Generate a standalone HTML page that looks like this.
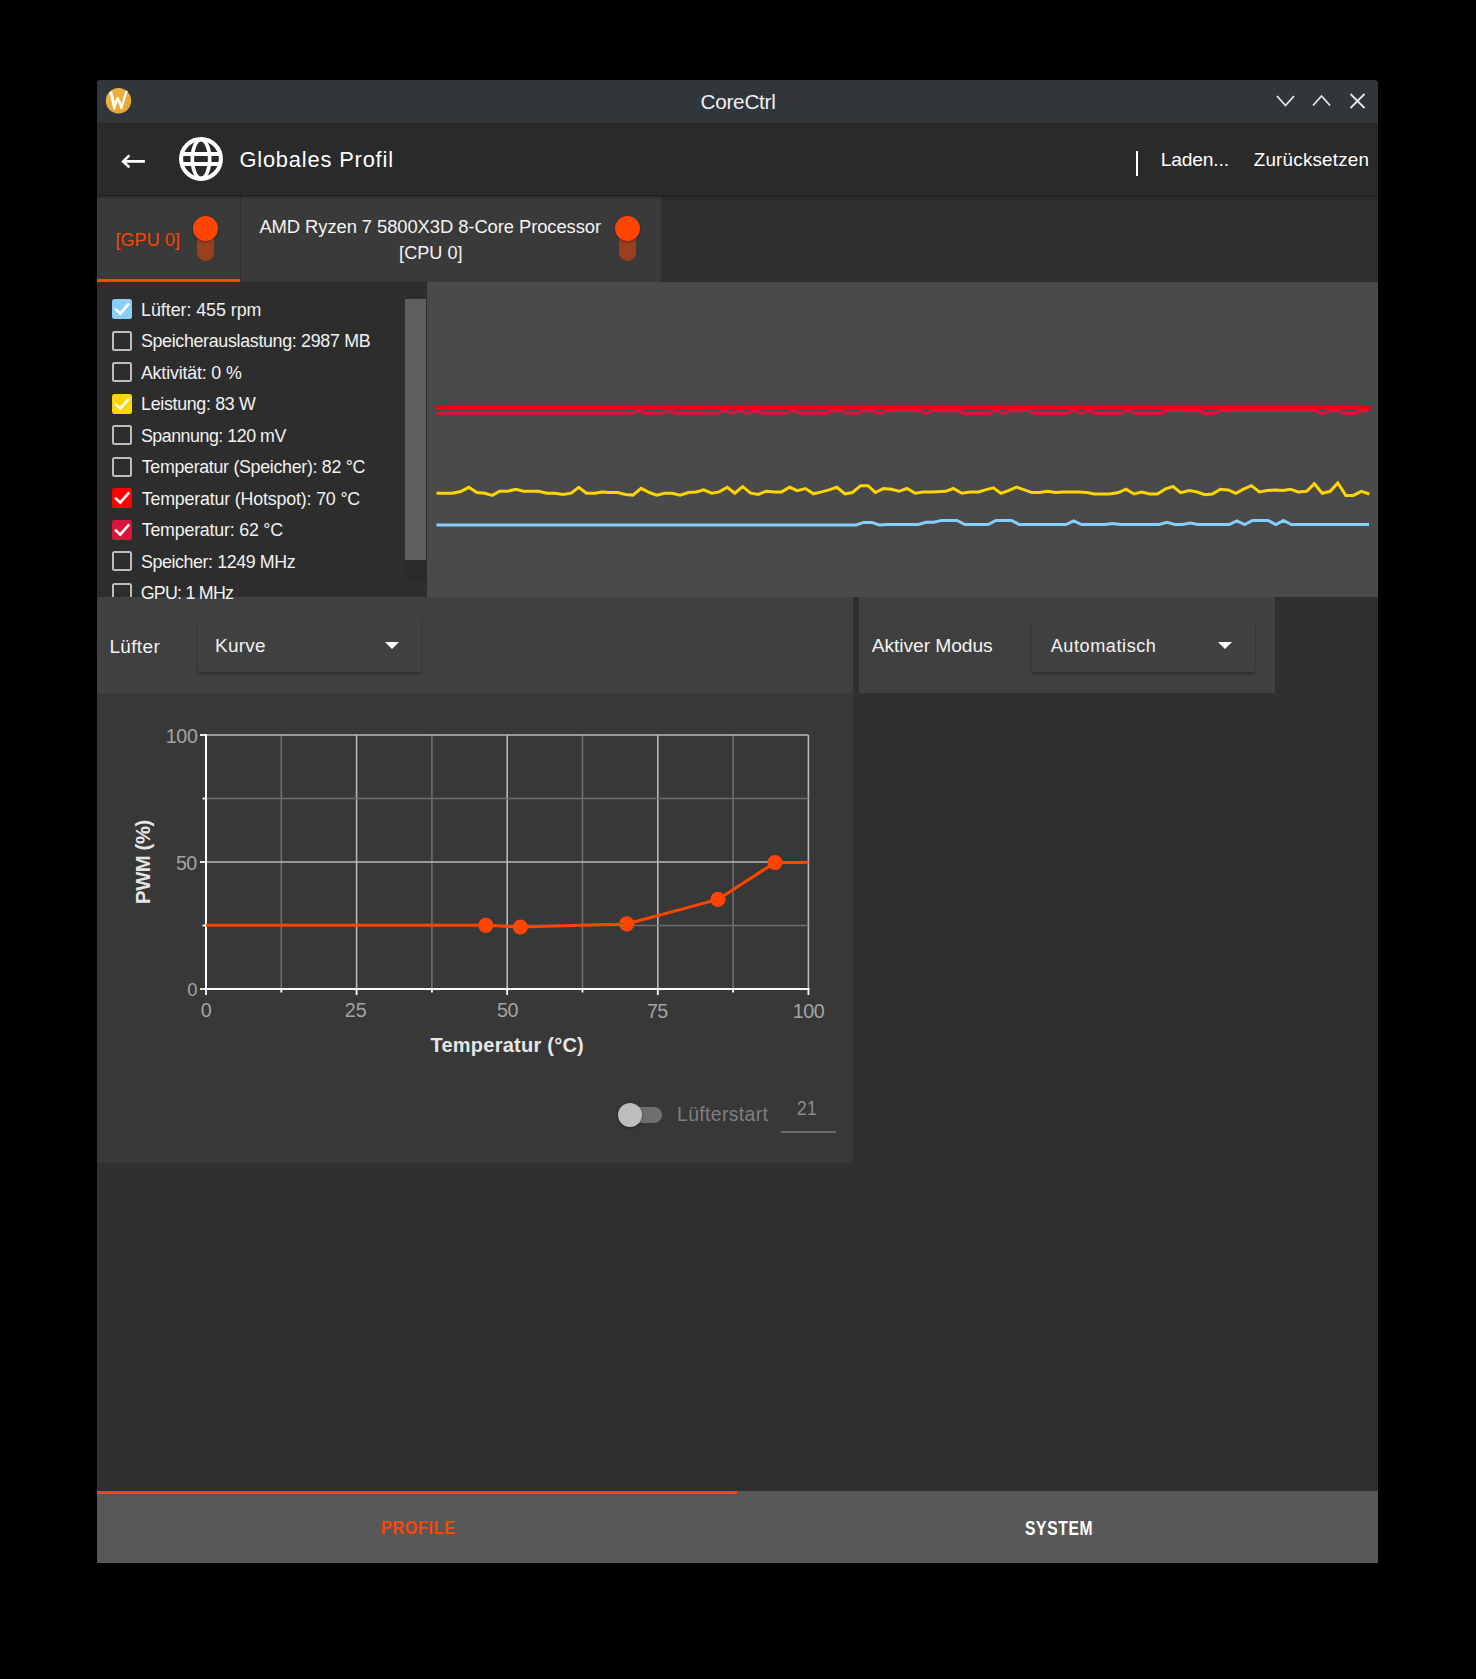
<!DOCTYPE html>
<html><head><meta charset="utf-8">
<style>
*{box-sizing:border-box;margin:0;padding:0}
html,body{width:1476px;height:1679px;background:#000;overflow:hidden;font-family:"Liberation Sans",sans-serif;color:#f0f0f0}
.a{position:absolute}
.t{position:absolute;white-space:nowrap;line-height:1}
</style></head><body>
<div class="a" id="win" style="left:97px;top:80px;width:1281px;height:1483px;background:#303030;border-radius:4px 4px 0 0;overflow:hidden">
</div>
<!-- titlebar -->
<div class="a" style="left:97px;top:80px;width:1281px;height:43px;background:#31363b;border-radius:4px 4px 0 0"></div>
<svg class="a" style="left:104px;top:86px" width="30" height="30" viewBox="0 0 30 30">
 <defs><linearGradient id="wg" x1="0" y1="0" x2="1" y2="1"><stop offset="0" stop-color="#eeb24e"/><stop offset="0.6" stop-color="#e9ad3a"/><stop offset="1" stop-color="#e6a42a"/></linearGradient></defs>
 <circle cx="14.5" cy="14.7" r="12.7" fill="url(#wg)"/>
 <path d="M5.4 5.9 L8.1 5.6 L10.6 15.8 L13.5 10.8 L14.1 10.8 L17.6 17.2 L21.3 4.9 L23.8 4.8 L18.2 22.8 Q17.4 24.2 16.6 22.8 L13.8 14.9 L11.1 22.9 Q10.2 24.2 9.3 22.9 Z" fill="#fff"/>
</svg>

<svg class="a" style="left:1270px;top:86px" width="100" height="30" viewBox="0 0 100 30">
 <path d="M7 10 L15.5 19.5 L24 10" fill="none" stroke="#e8e8e8" stroke-width="1.8"/>
 <path d="M43 19.5 L51.5 10 L60 19.5" fill="none" stroke="#e8e8e8" stroke-width="1.8"/>
 <path d="M80.5 8 L94.5 22 M94.5 8 L80.5 22" fill="none" stroke="#e8e8e8" stroke-width="1.8"/>
</svg>
<!-- header -->
<div class="a" style="left:97px;top:123px;width:1281px;height:72px;background:#2a2a2a"></div>

<svg class="a" style="left:118px;top:150px" width="30" height="22" viewBox="0 0 30 22">
 <path d="M5.5 11.4 L26.9 11.4 M11.4 5.4 L5.2 11.4 L11.4 17.4" fill="none" stroke="#fff" stroke-width="2.7" stroke-linecap="butt"/>
</svg>
<svg class="a" style="left:177px;top:135px" width="48" height="48" viewBox="0 0 48 48">
 <circle cx="24" cy="24" r="19.9" fill="none" stroke="#fff" stroke-width="4.1"/>
 <ellipse cx="24" cy="24" rx="8.7" ry="19.3" fill="none" stroke="#fff" stroke-width="3.6"/>
 <path d="M4 19 L44 19 M4 29 L44 29" stroke="#fff" stroke-width="4"/>
</svg>

<div class="a" style="left:1136px;top:151px;width:2px;height:25px;background:#fff"></div>


<!-- tabs -->
<div class="a" style="left:97px;top:196px;width:1281px;height:86px;background:#2f2f2f"></div>
<div class="a" style="left:97px;top:196px;width:143px;height:86px;background:#3a3a3a"></div>
<div class="a" style="left:241px;top:196px;width:420px;height:86px;background:#3a3a3a"></div>
<div class="a" style="left:97px;top:279px;width:143px;height:3px;background:#ff4500"></div>

<div class="a" style="left:197px;top:225px;width:17px;height:36px;border-radius:8.5px;background:#9a3f1f"></div>
<div class="a" style="left:193px;top:216px;width:25px;height:25px;border-radius:50%;background:#ff4500;box-shadow:0 1px 3px rgba(0,0,0,.35)"></div>


<div class="a" style="left:619px;top:225px;width:17px;height:36px;border-radius:8.5px;background:#9a3f1f"></div>
<div class="a" style="left:615px;top:216px;width:25px;height:25px;border-radius:50%;background:#ff4500;box-shadow:0 1px 3px rgba(0,0,0,.35)"></div>
<div class="a" style="left:97px;top:195px;width:1281px;height:1px;background:#1f1f1f"></div><div class="a" style="left:661px;top:196px;width:717px;height:5px;background:linear-gradient(#262626,#2f2f2f)"></div><div class="a" style="left:97px;top:196px;width:564px;height:4px;background:linear-gradient(rgba(0,0,0,.25),rgba(0,0,0,0))"></div>
<!-- sensors list -->
<div class="a" style="left:97px;top:282px;width:330px;height:315px;background:#2d2d2d;overflow:hidden" id="list">
<div class="a" style="left:15px;top:17.0px;width:20.4px;height:20.4px;border-radius:2.5px;background:#87cefa"><svg width="20.5" height="20.5" viewBox="0 0 20.5 20.5"><path d="M3.1 9.6 L8.2 14.6 L17.2 4.3" fill="none" stroke="#fff" stroke-width="2.6"/></svg></div><div class="a" style="left:15px;top:48.5px;width:20.4px;height:20.4px;border-radius:2.5px;border:2.3px solid #bdbdbd"></div><div class="a" style="left:15px;top:80.0px;width:20.4px;height:20.4px;border-radius:2.5px;border:2.3px solid #bdbdbd"></div><div class="a" style="left:15px;top:111.5px;width:20.4px;height:20.4px;border-radius:2.5px;background:#ffd700"><svg width="20.5" height="20.5" viewBox="0 0 20.5 20.5"><path d="M3.1 9.6 L8.2 14.6 L17.2 4.3" fill="none" stroke="#fff" stroke-width="2.6"/></svg></div><div class="a" style="left:15px;top:143.0px;width:20.4px;height:20.4px;border-radius:2.5px;border:2.3px solid #bdbdbd"></div><div class="a" style="left:15px;top:174.5px;width:20.4px;height:20.4px;border-radius:2.5px;border:2.3px solid #bdbdbd"></div><div class="a" style="left:15px;top:206.0px;width:20.4px;height:20.4px;border-radius:2.5px;background:#ff0000"><svg width="20.5" height="20.5" viewBox="0 0 20.5 20.5"><path d="M3.1 9.6 L8.2 14.6 L17.2 4.3" fill="none" stroke="#fff" stroke-width="2.6"/></svg></div><div class="a" style="left:15px;top:237.5px;width:20.4px;height:20.4px;border-radius:2.5px;background:#dc143c"><svg width="20.5" height="20.5" viewBox="0 0 20.5 20.5"><path d="M3.1 9.6 L8.2 14.6 L17.2 4.3" fill="none" stroke="#fff" stroke-width="2.6"/></svg></div><div class="a" style="left:15px;top:269.0px;width:20.4px;height:20.4px;border-radius:2.5px;border:2.3px solid #bdbdbd"></div><div class="a" style="left:15px;top:300.5px;width:20.4px;height:20.4px;border-radius:2.5px;border:2.3px solid #bdbdbd"></div>
</div>
<div class="a" style="left:405px;top:299px;width:21px;height:261px;background:#5f5f5f"></div>
<div class="a" style="left:405px;top:560px;width:21px;height:21px;background:#2a2a2a"></div>
<!-- chart -->
<div class="a" style="left:427px;top:282px;width:951px;height:315px;background:#4a4a4a"></div>
<svg class="a" style="left:0;top:0" width="1476" height="1679" viewBox="0 0 1476 1679" fill="none" stroke-width="3" stroke-linejoin="miter">
<line x1="436.5" y1="407.5" x2="1369" y2="407.5" stroke="#ff0000" stroke-width="3"/>
<polyline points="436.5,493.2 452.5,493.2 460.7,491.5 468.8,487.3 476.9,492.5 485.0,493.2 492.2,495.4 499.7,491.2 507.8,491.2 515.9,489.3 523.4,491.2 538.7,491.2 546.8,493.2 555.0,493.2 563.1,494.5 571.2,493.2 578.7,487.3 586.5,493.2 594.6,493.2 602.1,491.9 610.2,492.5 617.7,492.5 625.5,494.5 633.0,495.1 641.1,488.3 649.3,492.5 656.7,495.1 664.6,493.2 672.0,493.2 680.2,495.1 688.3,492.5 696.4,491.9 703.6,489.9 711.7,493.2 719.2,491.9 727.3,487.3 734.8,493.2 742.6,486.7 750.7,493.2 758.2,494.5 766.3,491.2 774.5,491.9 781.6,491.9 789.8,487.3 797.2,490.6 805.4,488.6 813.5,493.8 821.6,491.9 829.1,489.9 836.9,487.3 845.0,493.8 852.5,492.5 860.7,485.7 868.1,485.7 875.3,492.5 883.4,488.6 891.5,489.3 899.0,491.3 907.0,488.5 915.2,493.3 923.2,492.0 931.8,492.0 945.7,491.3 953.3,488.5 961.9,493.3 969.8,492.0 978.5,492.0 985.4,489.9 993.3,487.8 1000.9,493.3 1008.5,490.6 1016.5,487.1 1024.4,489.9 1032.0,492.6 1039.6,492.6 1047.6,491.3 1055.5,492.6 1063.1,492.0 1078.7,492.0 1086.6,492.6 1094.2,494.0 1109.8,494.0 1118.4,492.6 1126.0,489.2 1134.0,494.0 1141.9,492.0 1149.5,494.0 1157.5,494.0 1165.1,489.2 1173.0,486.4 1180.6,492.6 1189.3,490.6 1197.2,492.0 1204.8,494.7 1212.4,494.0 1220.4,489.2 1228.3,489.9 1235.9,493.3 1243.5,489.2 1251.5,485.7 1259.4,492.0 1267.0,490.6 1275.6,489.9 1282.6,490.6 1290.5,489.2 1298.1,492.0 1306.7,491.3 1314.3,483.7 1322.3,493.3 1330.2,491.3 1337.8,483.0 1345.8,495.4 1353.4,495.4 1361.3,491.3 1369.3,494.0" stroke="#ffd500" />
<polyline points="436.5,413.3 444.3,413.3 452.0,413.3 459.8,413.3 467.6,413.3 475.4,413.3 483.1,413.3 490.9,413.3 498.7,413.3 506.4,413.3 514.2,413.3 522.0,413.3 529.8,413.3 537.5,413.3 545.3,413.3 553.1,413.3 560.8,413.3 568.6,413.3 576.4,413.3 584.1,413.3 591.9,413.3 599.7,413.3 607.5,413.3 615.2,413.3 623.0,413.3 630.8,413.3 638.5,410.8 646.3,413.3 654.1,413.3 661.9,413.3 669.6,410.8 677.4,413.3 685.2,413.3 692.9,413.3 700.7,413.3 708.5,413.3 716.2,413.3 724.0,410.8 731.8,413.3 739.6,410.8 747.3,413.3 755.1,410.8 762.9,413.3 770.6,413.3 778.4,413.3 786.2,413.3 794.0,410.8 801.7,413.3 809.5,413.3 817.3,413.3 825.0,413.3 832.8,410.8 840.6,410.8 848.4,413.3 856.1,413.3 863.9,410.8 871.7,410.8 879.4,413.3 887.2,410.6 895.0,410.6 902.8,410.6 910.5,410.6 918.3,410.6 926.1,413.5 933.8,410.6 941.6,410.6 949.4,410.6 957.1,410.6 964.9,413.5 972.7,413.5 980.5,413.5 988.2,413.5 996.0,410.6 1003.8,413.5 1011.5,410.6 1019.3,410.6 1027.1,410.6 1034.9,413.5 1042.6,413.5 1050.4,413.5 1058.2,413.5 1065.9,413.5 1073.7,410.6 1081.5,413.5 1089.2,410.6 1097.0,413.5 1104.8,413.5 1112.6,413.5 1120.3,413.5 1128.1,410.6 1135.9,413.5 1143.6,413.5 1151.4,413.5 1159.2,413.5 1167.0,410.6 1174.7,410.6 1182.5,410.6 1190.3,410.6 1198.0,410.6 1205.8,413.5 1213.6,413.5 1221.4,410.6 1229.1,410.6 1236.9,410.6 1244.7,410.6 1252.4,410.6 1260.2,410.6 1268.0,410.6 1275.8,410.6 1283.5,410.6 1291.3,410.6 1299.1,410.6 1306.8,410.6 1314.6,410.6 1322.4,413.5 1330.1,410.6 1337.9,410.6 1345.7,413.5 1353.5,413.5 1361.2,410.6 1369.0,410.6" stroke="#dc143c" />
<polyline points="436.5,525.0 444.3,525.0 452.0,525.0 459.8,525.0 467.6,525.0 475.4,525.0 483.1,525.0 490.9,525.0 498.7,525.0 506.4,525.0 514.2,525.0 522.0,525.0 529.8,525.0 537.5,525.0 545.3,525.0 553.1,525.0 560.8,525.0 568.6,525.0 576.4,525.0 584.1,525.0 591.9,525.0 599.7,525.0 607.5,525.0 615.2,525.0 623.0,525.0 630.8,525.0 638.5,525.0 646.3,525.0 654.1,525.0 661.9,525.0 669.6,525.0 677.4,525.0 685.2,525.0 692.9,525.0 700.7,525.0 708.5,525.0 716.2,525.0 724.0,525.0 731.8,525.0 739.6,525.0 747.3,525.0 755.1,525.0 762.9,525.0 770.6,525.0 778.4,525.0 786.2,525.0 794.0,525.0 801.7,525.0 809.5,525.0 817.3,525.0 825.0,525.0 832.8,525.0 840.6,525.0 848.4,525.0 856.1,525.0 863.9,522.4 871.7,522.4 879.4,525.0 887.2,524.5 895.0,524.5 902.8,524.5 910.5,524.5 918.3,524.5 926.1,522.3 933.8,522.3 941.6,520.4 949.4,520.4 957.1,520.4 964.9,524.5 972.7,524.5 980.5,524.5 988.2,524.5 996.0,520.4 1003.8,520.4 1011.5,520.4 1019.3,524.5 1027.1,524.5 1034.9,524.5 1042.6,524.5 1050.4,524.5 1058.2,524.5 1065.9,524.5 1073.7,521.0 1081.5,524.5 1089.2,524.5 1097.0,524.5 1104.8,524.5 1112.6,523.4 1120.3,524.5 1128.1,524.5 1135.9,524.5 1143.6,524.5 1151.4,524.5 1159.2,524.5 1167.0,522.3 1174.7,524.5 1182.5,524.5 1190.3,523.0 1198.0,524.5 1205.8,524.5 1213.6,524.5 1221.4,524.5 1229.1,524.5 1236.9,521.0 1244.7,524.5 1252.4,520.4 1260.2,520.4 1268.0,520.4 1275.8,524.5 1283.5,520.4 1291.3,524.5 1299.1,524.5 1306.8,524.5 1314.6,524.5 1322.4,524.5 1330.1,524.5 1337.9,524.5 1345.7,524.5 1353.5,524.5 1361.2,524.5 1369.0,524.5" stroke="#87cefa" />

</svg>
<!-- panels -->
<div class="a" style="left:97px;top:597px;width:756px;height:96px;background:#404040"></div>
<div class="a" style="left:859px;top:597px;width:416px;height:96px;background:#404040"></div>

<div class="a" style="left:198px;top:618px;width:223px;height:54px;background:#414141;border-radius:3px;box-shadow:0 2px 3px rgba(0,0,0,.3)"></div>

<div class="a" style="left:384.5px;top:642px;width:0;height:0;border-left:7.3px solid transparent;border-right:7.3px solid transparent;border-top:7.6px solid #fff"></div>

<div class="a" style="left:1032px;top:619px;width:223px;height:52.5px;background:#414141;border-radius:3px;box-shadow:0 2px 3px rgba(0,0,0,.3)"></div>

<div class="a" style="left:1218.3px;top:642px;width:0;height:0;border-left:7.4px solid transparent;border-right:7.4px solid transparent;border-top:7.6px solid #fff"></div>
<!-- fan curve panel -->
<div class="a" style="left:97px;top:693px;width:756px;height:470px;background:#383838"></div>
<svg class="a" style="left:0;top:0" width="1476" height="1679" viewBox="0 0 1476 1679" id="curve">
<line x1="281.3" y1="735" x2="281.3" y2="989" stroke="#6e6e6e" stroke-width="1.6"/><line x1="356.6" y1="735" x2="356.6" y2="989" stroke="#b8b8b8" stroke-width="1.6"/><line x1="431.9" y1="735" x2="431.9" y2="989" stroke="#6e6e6e" stroke-width="1.6"/><line x1="507.2" y1="735" x2="507.2" y2="989" stroke="#b8b8b8" stroke-width="1.6"/><line x1="582.5" y1="735" x2="582.5" y2="989" stroke="#6e6e6e" stroke-width="1.6"/><line x1="657.8" y1="735" x2="657.8" y2="989" stroke="#b8b8b8" stroke-width="1.6"/><line x1="733.1" y1="735" x2="733.1" y2="989" stroke="#6e6e6e" stroke-width="1.6"/><line x1="808.4" y1="735" x2="808.4" y2="989" stroke="#b8b8b8" stroke-width="1.6"/><line x1="206" y1="925.5" x2="808.4" y2="925.5" stroke="#6e6e6e" stroke-width="1.6"/><line x1="206" y1="862.0" x2="808.4" y2="862.0" stroke="#b8b8b8" stroke-width="1.6"/><line x1="206" y1="798.5" x2="808.4" y2="798.5" stroke="#6e6e6e" stroke-width="1.6"/><line x1="206" y1="735.0" x2="808.4" y2="735.0" stroke="#b8b8b8" stroke-width="1.6"/><line x1="206.0" y1="989" x2="206.0" y2="995" stroke="#fff" stroke-width="1.8"/><line x1="281.3" y1="989" x2="281.3" y2="992.5" stroke="#fff" stroke-width="1.8"/><line x1="356.6" y1="989" x2="356.6" y2="995" stroke="#fff" stroke-width="1.8"/><line x1="431.9" y1="989" x2="431.9" y2="992.5" stroke="#fff" stroke-width="1.8"/><line x1="507.2" y1="989" x2="507.2" y2="995" stroke="#fff" stroke-width="1.8"/><line x1="582.5" y1="989" x2="582.5" y2="992.5" stroke="#fff" stroke-width="1.8"/><line x1="657.8" y1="989" x2="657.8" y2="995" stroke="#fff" stroke-width="1.8"/><line x1="733.1" y1="989" x2="733.1" y2="992.5" stroke="#fff" stroke-width="1.8"/><line x1="808.4" y1="989" x2="808.4" y2="995" stroke="#fff" stroke-width="1.8"/><line x1="200" y1="989.0" x2="206" y2="989.0" stroke="#fff" stroke-width="1.8"/><line x1="202.5" y1="925.5" x2="206" y2="925.5" stroke="#fff" stroke-width="1.8"/><line x1="200" y1="862.0" x2="206" y2="862.0" stroke="#fff" stroke-width="1.8"/><line x1="202.5" y1="798.5" x2="206" y2="798.5" stroke="#fff" stroke-width="1.8"/><line x1="200" y1="735.0" x2="206" y2="735.0" stroke="#fff" stroke-width="1.8"/><line x1="206" y1="734" x2="206" y2="990" stroke="#fff" stroke-width="2"/><line x1="205" y1="989" x2="809.4" y2="989" stroke="#fff" stroke-width="2"/><polyline points="206,925.3 485.8,925.3 520.3,927 626.7,923.9 718,899.4 775,862.5 808.4,862.5" fill="none" stroke="#ff4500" stroke-width="3"/><circle cx="485.8" cy="925.3" r="7.6" fill="#ff4500"/><circle cx="520.3" cy="927" r="7.6" fill="#ff4500"/><circle cx="626.7" cy="923.9" r="7.6" fill="#ff4500"/><circle cx="718" cy="899.4" r="7.6" fill="#ff4500"/><circle cx="775" cy="862.5" r="7.6" fill="#ff4500"/>
</svg>
<div class="a" style="left:620px;top:1106.5px;width:42px;height:16px;border-radius:8px;background:#6f6f6f"></div><div class="a" style="left:617.5px;top:1102.5px;width:24.5px;height:24.5px;border-radius:50%;background:#bdbdbd;box-shadow:0 1px 3px rgba(0,0,0,.4)"></div><div class="a" style="left:781px;top:1131px;width:55px;height:2px;background:#6a6a6a"></div>
<!-- bottom bar -->
<div class="a" style="left:97px;top:1491px;width:1281px;height:72px;background:#585858"></div>
<div class="a" style="left:97px;top:1491px;width:640px;height:3px;background:#ff4500"></div>


<div id="pwm" style="position:absolute;white-space:nowrap;line-height:1;left:133.3px;top:904.4px;font-size:20.3px;font-weight:bold;letter-spacing:-0.4px;color:#e6e6e6;transform-origin:0 0;transform:rotate(-90deg)">PWM (%)</div>
<div class="t" id="title" style="left:700.50px;top:92.03px;font-size:20.72px;letter-spacing:-0.257px;color:#eff0f1">CoreCtrl</div>
<div class="t" id="gp" style="left:239.40px;top:148.95px;font-size:21.88px;letter-spacing:0.814px;color:#ffffff">Globales Profil</div>
<div class="t" id="laden" style="left:1160.80px;top:150.27px;font-size:19.28px;letter-spacing:-0.200px;color:#ffffff">Laden...</div>
<div class="t" id="zur" style="left:1253.75px;top:150.99px;font-size:18.84px;letter-spacing:0.200px;color:#ffffff">Zurücksetzen</div>
<div class="t" id="gpu" style="left:115.40px;top:232.42px;font-size:17.97px;letter-spacing:0.133px;color:#ff4500">[GPU 0]</div>
<div class="t" id="amd" style="left:259.40px;top:217.71px;font-size:18.41px;letter-spacing:-0.086px;color:#f4f4f4">AMD Ryzen 7 5800X3D 8-Core Processor</div>
<div class="t" id="cpu" style="left:399.10px;top:243.85px;font-size:18.12px;letter-spacing:0.000px;color:#f4f4f4">[CPU 0]</div>
<div class="t" id="luf" style="left:109.40px;top:637.41px;font-size:18.99px;letter-spacing:0.360px;color:#f2f2f2">Lüfter</div>
<div class="t" id="kurve" style="left:215.10px;top:636.41px;font-size:18.99px;letter-spacing:0.200px;color:#f2f2f2">Kurve</div>
<div class="t" id="akt" style="left:871.70px;top:636.27px;font-size:19.28px;letter-spacing:-0.083px;color:#f2f2f2">Aktiver Modus</div>
<div class="t" id="auto" style="left:1050.70px;top:636.85px;font-size:18.12px;letter-spacing:0.560px;color:#f2f2f2">Automatisch</div>
<div class="t" id="temp" style="left:430.50px;top:1034.90px;font-size:20.00px;letter-spacing:0.243px;font-weight:bold;color:#e6e6e6">Temperatur (°C)</div>
<div class="t" id="lst" style="left:677.10px;top:1105.19px;font-size:19.42px;letter-spacing:0.340px;color:#7f7f7f">Lüfterstart</div>
<div class="t" id="n21" style="left:797.40px;top:1099.19px;font-size:19.42px;letter-spacing:0.300px;color:#8c8c8c;transform-origin:0 0;transform:scaleX(0.8926)">21</div>
<div class="t" id="prof" style="left:380.55px;top:1519.35px;font-size:18.62px;letter-spacing:0.800px;font-weight:bold;color:#ff4500;transform-origin:0 0;transform:scaleX(0.8661)">PROFILE</div>
<div class="t" id="sys" style="left:1025.10px;top:1518.62px;font-size:19.57px;letter-spacing:0.800px;font-weight:bold;color:#ffffff;transform-origin:0 0;transform:scaleX(0.8001)">SYSTEM</div>
<div class="t" id="xl0" style="left:200.70px;top:1001.05px;font-size:19.71px;letter-spacing:-2.000px;color:#a3a3a3">0</div>
<div class="t" id="xl25" style="left:344.70px;top:1001.05px;font-size:19.71px;letter-spacing:0.200px;color:#a3a3a3">25</div>
<div class="t" id="xl50" style="left:497.10px;top:1001.05px;font-size:19.71px;letter-spacing:-0.600px;color:#a3a3a3">50</div>
<div class="t" id="xl75" style="left:647.10px;top:1002.05px;font-size:19.71px;letter-spacing:-0.800px;color:#a3a3a3">75</div>
<div class="t" id="xl100" style="left:792.80px;top:1002.05px;font-size:19.71px;letter-spacing:-0.500px;color:#a3a3a3">100</div>
<div class="t" id="yl100" style="left:165.70px;top:727.05px;font-size:19.71px;letter-spacing:-0.300px;color:#a3a3a3">100</div>
<div class="t" id="yl50" style="left:176.00px;top:854.05px;font-size:19.71px;letter-spacing:-0.600px;color:#a3a3a3">50</div>
<div class="t" id="yl0" style="left:187.30px;top:980.71px;font-size:18.41px;letter-spacing:-0.400px;color:#a3a3a3">0</div>
<div class="t" id="li0" style="left:141.10px;top:302.00px;font-size:17.83px;letter-spacing:-0.043px;color:#f2f2f2">Lüfter: 455 rpm</div>
<div class="t" id="li1" style="left:140.90px;top:333.00px;font-size:17.83px;letter-spacing:-0.315px;color:#f2f2f2">Speicherauslastung: 2987 MB</div>
<div class="t" id="li2" style="left:140.90px;top:365.00px;font-size:17.83px;letter-spacing:-0.169px;color:#f2f2f2">Aktivität: 0 %</div>
<div class="t" id="li3" style="left:141.10px;top:396.00px;font-size:17.83px;letter-spacing:-0.323px;color:#f2f2f2">Leistung: 83 W</div>
<div class="t" id="li4" style="left:140.90px;top:428.00px;font-size:17.83px;letter-spacing:-0.480px;color:#f2f2f2">Spannung: 120 mV</div>
<div class="t" id="li5" style="left:141.70px;top:459.00px;font-size:17.83px;letter-spacing:-0.311px;color:#f2f2f2">Temperatur (Speicher): 82 °C</div>
<div class="t" id="li6" style="left:141.70px;top:491.00px;font-size:17.83px;letter-spacing:-0.177px;color:#f2f2f2">Temperatur (Hotspot): 70 °C</div>
<div class="t" id="li7" style="left:141.70px;top:522.00px;font-size:17.83px;letter-spacing:-0.213px;color:#f2f2f2">Temperatur: 62 °C</div>
<div class="t" id="li8" style="left:140.90px;top:554.00px;font-size:17.83px;letter-spacing:-0.400px;color:#f2f2f2">Speicher: 1249 MHz</div>
<div class="t" id="li9" style="left:140.70px;top:585.00px;font-size:17.83px;letter-spacing:-0.756px;color:#f2f2f2">GPU: 1 MHz</div>
</body></html>
